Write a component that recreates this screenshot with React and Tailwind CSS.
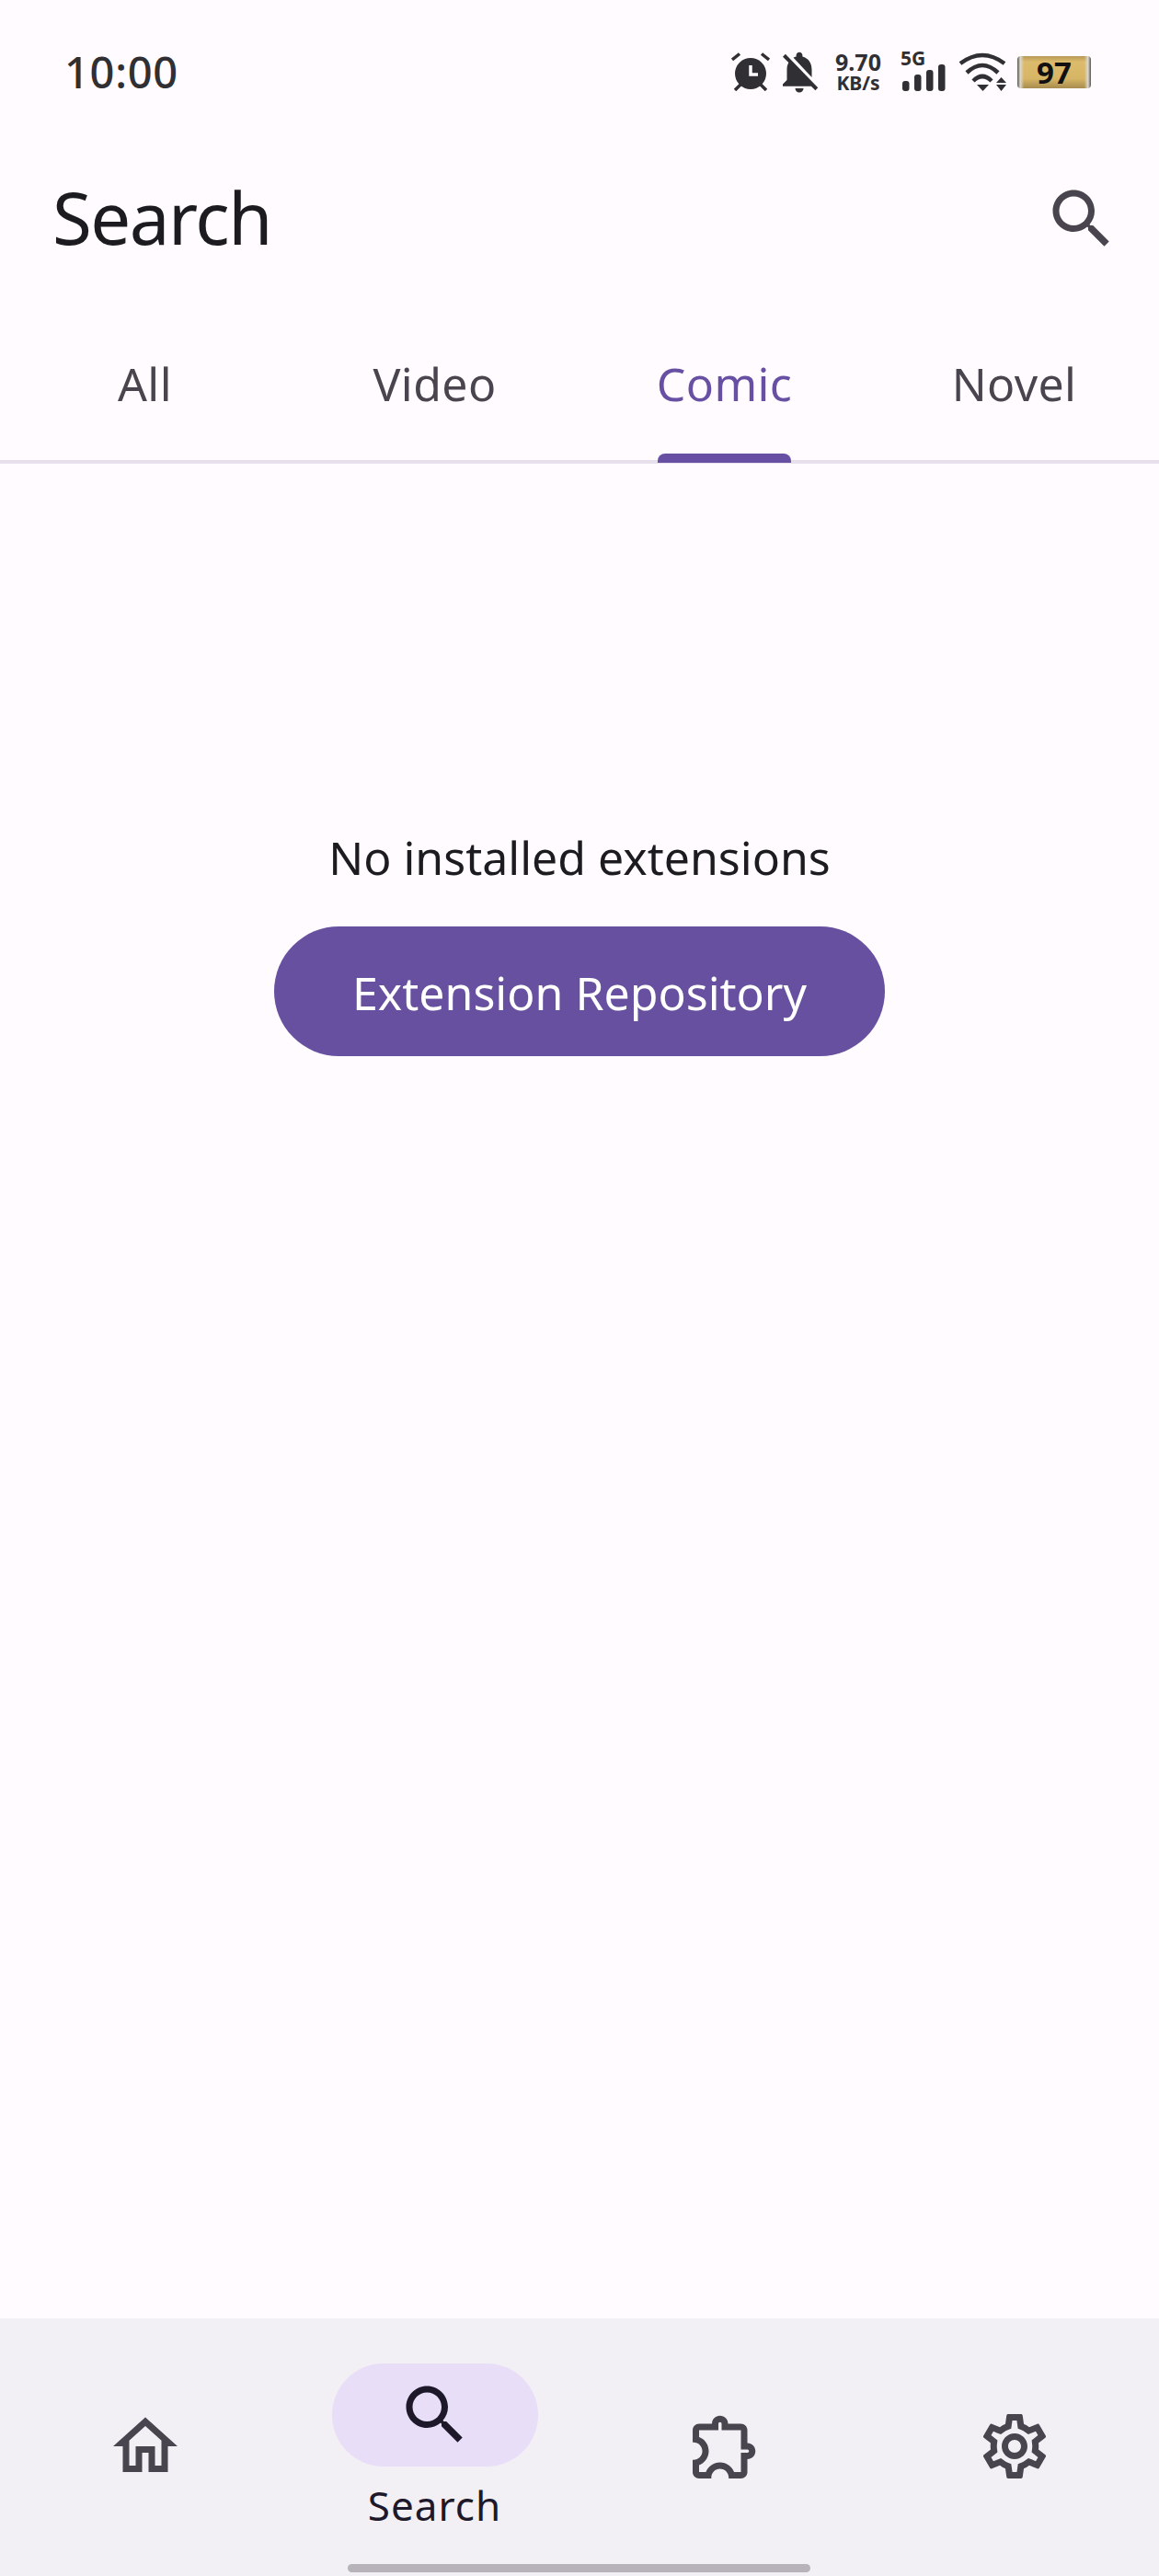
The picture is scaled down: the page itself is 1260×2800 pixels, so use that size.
import React from 'react';

const font = { fontFamily: '"Noto Sans", sans-serif' };

const Icon = ({ d, size = 84, className = '' }) => (
  <svg width={size} height={size} viewBox="0 0 24 24" fill="currentColor" className={className}>
    <path d={d} />
  </svg>
);

const SEARCH = 'M15.5 14h-.79l-.28-.27C15.41 12.59 16 11.11 16 9.5 16 5.91 13.09 3 9.5 3S3 5.91 3 9.5 5.91 16 9.5 16c1.61 0 3.09-.59 4.23-1.57l.27.28v.79l5 4.99L20.49 19l-4.99-5zm-6 0C7.01 14 5 11.99 5 9.5S7.01 5 9.5 5 14 7.01 14 9.5 11.99 14 9.5 14z';
const HOME = 'M12 5.69l5 4.5V18h-2v-6H9v6H7v-7.81l5-4.5M12 3L2 12h3v8h6v-6h2v6h6v-8h3L12 3z';
const EXTENSION = 'M10.5 4.5c.28 0 .5.22.5.5v2h6v6h2c.28 0 .5.22.5.5s-.22.5-.5.5h-2v6h-2.12c-.68-1.75-2.39-3-4.38-3s-3.7 1.25-4.38 3H4v-2.12c1.75-.68 3-2.39 3-4.38 0-1.99-1.24-3.7-2.99-4.38L4 7h6V5c0-.28.22-.5.5-.5m0-2C9.12 2.5 8 3.62 8 5H4c-1.1 0-1.99.9-1.99 2v3.8h.29c1.49 0 2.7 1.21 2.7 2.7s-1.21 2.7-2.7 2.7H2V20c0 1.1.9 2 2 2h3.8v-.3c0-1.49 1.21-2.7 2.7-2.7s2.7 1.21 2.7 2.7v.3H17c1.1 0 2-.9 2-2v-4c1.38 0 2.5-1.12 2.5-2.5S20.38 11 19 11V7c0-1.1-.9-2-2-2h-4c0-1.38-1.12-2.5-2.5-2.5z';
const SETTINGS = 'M19.43 12.98c.04-.32.07-.64.07-.98 0-.34-.03-.66-.07-.98l2.11-1.65c.19-.15.24-.42.12-.64l-2-3.46c-.09-.16-.26-.25-.44-.25-.06 0-.12.01-.17.03l-2.49 1c-.52-.4-1.08-.73-1.69-.98l-.38-2.65C14.46 2.18 14.25 2 14 2h-4c-.25 0-.46.18-.49.42l-.38 2.65c-.61.25-1.17.59-1.69.98l-2.49-1c-.06-.02-.12-.03-.18-.03-.17 0-.34.09-.43.25l-2 3.46c-.13.22-.07.49.12.64l2.11 1.65c-.04.32-.07.65-.07.98 0 .33.03.66.07.98l-2.11 1.65c-.19.15-.24.42-.12.64l2 3.46c.09.16.26.25.44.25.06 0 .12-.01.17-.03l2.49-1c.52.4 1.08.73 1.69.98l.38 2.65c.03.24.24.42.49.42h4c.25 0 .46-.18.49-.42l.38-2.65c.61-.25 1.17-.59 1.69-.98l2.49 1c.06.02.12.03.18.03.17 0 .34-.09.43-.25l2-3.46c.12-.22.07-.49-.12-.64l-2.11-1.65zm-1.98-1.71c.04.31.05.52.05.73 0 .21-.02.43-.05.73l-.14 1.13.89.7 1.08.84-.7 1.21-1.27-.51-1.04-.42-.9.68c-.43.32-.84.56-1.25.73l-1.06.43-.16 1.13-.2 1.35h-1.4l-.19-1.35-.16-1.13-1.06-.43c-.43-.18-.83-.41-1.23-.71l-.91-.7-1.06.43-1.27.51-.7-1.21 1.08-.84.89-.7-.14-1.13c-.03-.31-.05-.54-.05-.74s.02-.43.05-.73l.14-1.13-.89-.7-1.08-.84.7-1.21 1.27.51 1.04.42.9-.68c.43-.32.84-.56 1.25-.73l1.06-.43.16-1.13.2-1.35h1.39l.19 1.35.16 1.13 1.06.43c.43.18.83.41 1.23.71l.91.7 1.06-.43 1.27-.51.7 1.21-1.07.85-.89.7.14 1.13zM12 8c-2.21 0-4 1.79-4 4s1.79 4 4 4 4-1.79 4-4-1.79-4-4-4zm0 6c-1.1 0-2-.9-2-2s.9-2 2-2 2 .9 2 2-.9 2-2 2z';
const BELL_OFF = 'M20 18.69L7.84 6.14 5.27 3.49 4 4.76l2.8 2.8v.01c-.52.99-.8 2.16-.8 3.42v5l-2 2v1h13.73l2 2L21 19.72l-1-1.03zM12 22c1.11 0 2-.89 2-2h-4c0 1.11.89 2 2 2zm6-7.32V11c0-3.08-1.64-5.64-4.5-6.32V4c0-.83-.67-1.5-1.5-1.5s-1.5.67-1.5 1.5v.68c-.15.03-.29.08-.42.12-.1.03-.2.07-.3.11h-.01c-.2.08-.4.17-.59.27-.01 0-.01 0-.02.01L18 14.68z';

const StatusBar = () => (
  <div className="h-[156px] flex items-center pl-[70px] pr-[74px] text-[#302f33]">
    <span className="text-[47px] font-medium leading-none tracking-[0.7px]">10:00</span>
    <div className="ml-auto flex items-center">
      {/* alarm */}
      <svg width="42" height="42" viewBox="0 0 42 42" fill="none">
        <circle cx="21" cy="23" r="17" fill="#302f33" />
        <path d="M21 14v10h8" stroke="#fffbfe" strokeWidth="3.5" />
        <path d="M1 8l8-6.500M41 8l-8-6.500M4 41l6-6M38 41l-6-6" stroke="#302f33" strokeWidth="3.5" />
      </svg>
      <Icon d={BELL_OFF} size={54} className="ml-[5px]" />
      <div className="ml-[11px] w-[52px] flex flex-col items-center font-bold">
        <div className="text-[25px] leading-[25px]">9.70</div>
        <div className="text-[21px] leading-[21px]">KB/s</div>
      </div>
      {/* 5G + signal */}
      <div className="ml-[20px] w-[48px] h-[42px] relative">
        <div className="absolute left-0 top-[-6px] text-[21px] font-bold leading-[24px]">5G</div>
        <svg width="48" height="29" viewBox="0 0 48 29" className="absolute left-[2px] bottom-0" fill="#302f33">
          <rect x="0" y="18" width="7.500" height="11" rx="3" />
          <rect x="13" y="11" width="7.500" height="18" rx="3" />
          <rect x="26" y="6" width="7.500" height="23" rx="3" />
          <rect x="39" y="0" width="7.500" height="29" rx="3" />
        </svg>
      </div>
      {/* wifi */}
      <svg width="52" height="42" viewBox="0 0 52 42" fill="none" className="ml-[15px]">
        <path d="M2 12Q26 -6 50 12" stroke="#302f33" strokeWidth="4.500" />
        <path d="M9 22Q26 6 43 22" stroke="#302f33" strokeWidth="4.500" />
        <path d="M16 31Q26 21 36 31" stroke="#302f33" strokeWidth="4.500" />
        <path d="M20 35h13l-6.500 7z" fill="#302f33" />
        <path d="M41 33h11l-5.500-6zM41 35h11l-5.500 7z" fill="#302f33" />
      </svg>
      {/* battery */}
      <div className="ml-[12px] w-[80px] h-[35px] rounded-[4px] bg-[linear-gradient(90deg,#55524c_0%,#dcd9d0_4%,#dcd9d000_9%,#dcd9d000_91%,#dcd9d0_96%,#55524c_100%),linear-gradient(180deg,#b79a58_0%,#dcbb6c_18%,#d6b565_70%,#a88c4e_100%)] flex items-center justify-center">
        <span className="text-[33px] font-bold leading-none text-[#111111]">97</span>
      </div>
    </div>
  </div>
);

const Tabs = () => (
  <div className="h-[185px] grid grid-cols-4 border-b-[4px] border-[#e7e0ec]">
    {['All', 'Video', 'Comic', 'Novel'].map((tab) => {
      const active = tab === 'Comic';
      return (
        <div key={tab} className={`relative flex justify-center pt-[66px] text-[50px] tracking-[0.4px] leading-[64px] ${active ? 'text-[#6750a4]' : 'text-[#49454f]'}`}>
          <span>{tab}</span>
          {active && <div className="absolute bottom-[-3px] h-[10px] w-[145px] rounded-t-[8px] bg-[#6750a4]" />}
        </div>
      );
    })}
  </div>
);

const NavItem = ({ d }) => (
  <div className="flex justify-center pt-[97px] text-[#49454f]">
    <Icon d={d} />
  </div>
);

const BottomNav = () => (
  <div className="relative h-[280px] bg-[#f2eff5] grid grid-cols-4">
    <NavItem d={HOME} />
    <div className="flex flex-col items-center pt-[49px] text-[#1d192b]">
      <div className="w-[224px] h-[112px] rounded-full bg-[#e8def8] flex items-center justify-center">
        <Icon d={SEARCH} />
      </div>
      <span className="mt-[15px] text-[44px] leading-[54px] tracking-[1px]">Search</span>
    </div>
    <NavItem d={EXTENSION} />
    <NavItem d={SETTINGS} />
    {/* gesture bar */}
    <div className="absolute left-[378px] bottom-[4px] w-[503px] h-[9px] rounded-full bg-[#b8b3ba]" />
  </div>
);

export default function App() {
  return (
    <div style={font} className="w-[1260px] h-[2800px] flex flex-col bg-[#fffbfe] overflow-hidden">
      <StatusBar />
      <div className="h-[163px] flex items-center justify-between pl-[57px] pr-[42px]">
        <h1 className="text-[78px] leading-none tracking-[-1.5px] text-[#1c1b1f] mb-[3px]">Search</h1>
        <Icon d={SEARCH} className="text-[#49454f]" />
      </div>
      <Tabs />
      <div className="flex-1 flex flex-col items-center pt-[396px]">
        <p className="text-[50px] leading-[64px] text-[#1c1b1f]">No installed extensions</p>
        <button className="mt-[43px] w-[664px] h-[141px] pt-[3px] rounded-full bg-[#66509f] text-[50px] text-white">
          Extension Repository
        </button>
      </div>
      <BottomNav />
    </div>
  );
}
